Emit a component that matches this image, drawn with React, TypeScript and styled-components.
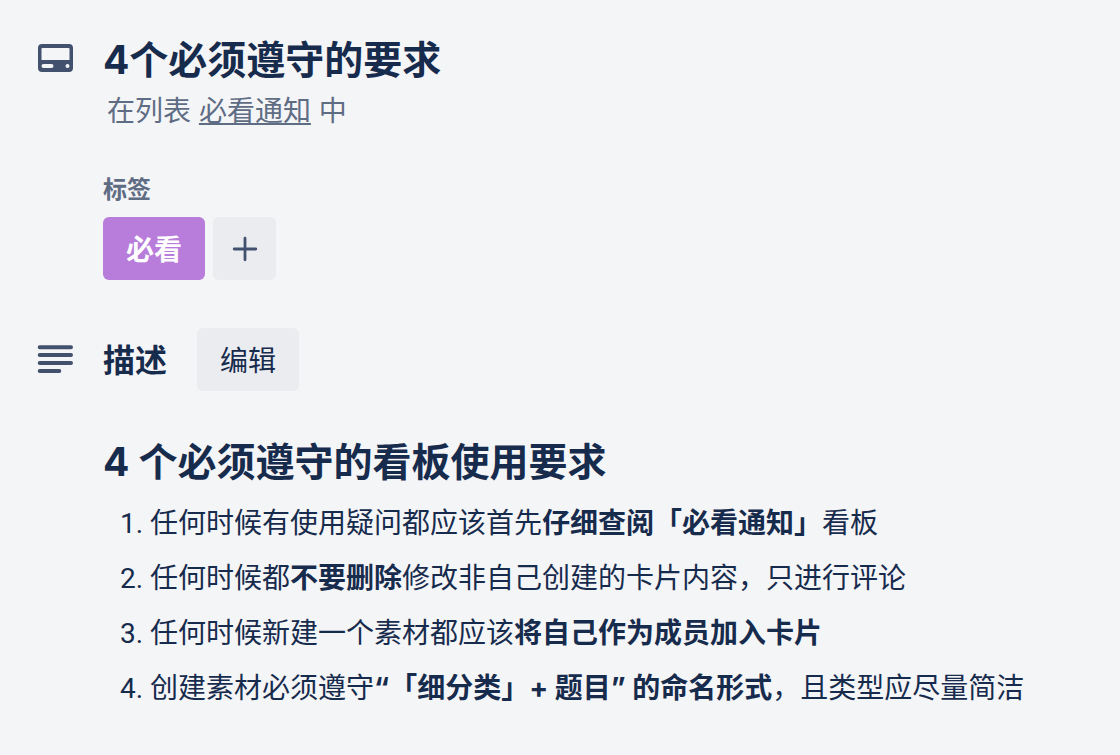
import React from "react";
import styled, { createGlobalStyle } from "styled-components";

const color = {
  page: "#f4f5f7",
  text: "#172b4d",
  subtle: "#5e6c84",
  icon: "#42526e",
  neutral: "#ebecf0",
  purple: "#b87ddb",
};

const GlobalStyle = createGlobalStyle`
  *, *::before, *::after { box-sizing: border-box; }
  body {
    margin: 0;
    background: ${color.page};
    color: ${color.text};
    font-family: Inter, "Noto Sans CJK SC", sans-serif;
    font-size: 28px;
    line-height: 40px;
    text-spacing-trim: space-all;
  }
  h1, h2, h3, p, ol { margin: 0; padding: 0; }
  button { font: inherit; color: inherit; border: 0; cursor: pointer; }
`;

const Card = styled.main`
  display: flex;
  flex-direction: column;
  padding: 32px 36px;
`;

const Section = styled.section<{ $space?: number }>`
  display: grid;
  grid-template-columns: 38px minmax(0, 1fr);
  column-gap: 29px;
  margin-top: ${(p) => p.$space ?? 0}px;
`;

const IconCell = styled.div<{ $height: number }>`
  display: flex;
  align-items: center;
  height: ${(p) => p.$height}px;
  color: ${color.icon};
`;

const Body = styled.div`
  grid-column: 2;
`;

const Title = styled.h1`
  font-size: 39px;
  line-height: 56px;
  font-weight: 700;
`;

const ListName = styled.p`
  padding-left: 4px;
  margin-top: 3px;
  color: ${color.subtle};
`;

const ListLink = styled.a`
  color: inherit;
  text-decoration: underline;
  text-decoration-thickness: 2px;
  text-underline-offset: 2px;
`;

const LabelHeading = styled.h3`
  font-size: 24px;
  line-height: 32px;
  font-weight: 600;
  color: ${color.subtle};
`;

const Row = styled.div<{ $gap: number; $top?: number }>`
  display: flex;
  align-items: center;
  gap: ${(p) => p.$gap}px;
  margin-top: ${(p) => p.$top ?? 0}px;
`;

const Button = styled.button<{ $tone?: "purple" | "neutral"; $square?: boolean }>`
  display: flex;
  align-items: center;
  justify-content: center;
  height: 63px;
  min-width: 63px;
  padding: ${(p) => (p.$square ? "0" : "2px 23px 0")};
  border-radius: 6px;
  background: ${(p) => (p.$tone === "purple" ? color.purple : color.neutral)};
  color: ${(p) => (p.$tone === "purple" ? "#fff" : color.text)};
  font-weight: ${(p) => (p.$tone === "purple" ? 700 : 400)};
`;

const SectionTitle = styled.h2`
  padding-top: 2px;
  font-size: 32px;
  line-height: 40px;
  font-weight: 700;
`;

const DescriptionTitle = styled(Title).attrs({ as: "h2" })`
  margin-top: 43px;
`;

const Rules = styled.ol`
  && {
    padding-left: 47px;
    margin-top: 13px;
  }
  display: flex;
  flex-direction: column;
  gap: 15px;

  li::marker {
    font-family: Roboto, sans-serif;
  }
`;

const Strong = styled.strong`
  font-weight: 700;
`;

const CardIcon = () => (
  <svg width="38" height="32" viewBox="0 0 38 32" aria-hidden="true">
    <path
      fill="currentColor"
      fillRule="evenodd"
      d="M6 2h27a4 4 0 0 1 4 4v20a4 4 0 0 1-4 4H6a4 4 0 0 1-4-4V6a4 4 0 0 1 4-4Zm.5 4a1 1 0 0 0-1 1v11h28V7a1 1 0 0 0-1-1ZM7.500 22a2 2 0 0 0 0 4h8a2 2 0 0 0 0-4Zm24 0a2 2 0 1 0 0 4 2 2 0 0 0 0-4Z"
    />
  </svg>
);

const LinesIcon = () => (
  <svg width="38" height="32" viewBox="0 0 38 32" aria-hidden="true">
    <g stroke="currentColor" strokeWidth="4" strokeLinecap="round">
      <path d="M3.700 3.200H35M3.700 11.100H35M3.700 19H35M3.700 26.900H23.300" />
    </g>
  </svg>
);

const PlusIcon = () => (
  <svg width="26" height="26" viewBox="0 0 26 26" aria-hidden="true">
    <path
      d="M13 2.200v21.600M2.200 13h21.600"
      stroke={color.icon}
      strokeWidth="2.800"
      strokeLinecap="round"
    />
  </svg>
);

export default function App() {
  return (
    <>
      <GlobalStyle />
      <Card lang="zh-CN">
        <Section>
          <IconCell $height={52}>
            <CardIcon />
          </IconCell>
          <Body>
            <Title>4个必须遵守的要求</Title>
            <ListName>
              在列表 <ListLink href="#list">必看通知</ListLink> 中
            </ListName>
          </Body>
        </Section>

        <Section $space={43}>
          <Body>
            <LabelHeading>标签</LabelHeading>
            <Row $gap={8} $top={11}>
              <Button type="button" $tone="purple">
                必看
              </Button>
              <Button type="button" $square aria-label="添加标签">
                <PlusIcon />
              </Button>
            </Row>
          </Body>
        </Section>

        <Section $space={48}>
          <IconCell $height={63}>
            <LinesIcon />
          </IconCell>
          <Body>
            <Row $gap={30}>
              <SectionTitle>描述</SectionTitle>
              <Button type="button">编辑</Button>
            </Row>
            <DescriptionTitle>4 个必须遵守的看板使用要求</DescriptionTitle>
            <Rules>
              <li>
                任何时候有使用疑问都应该首先<Strong>仔细查阅「必看通知」</Strong>看板
              </li>
              <li>
                任何时候都<Strong>不要删除</Strong>修改非自己创建的卡片内容，只进行评论
              </li>
              <li>
                任何时候新建一个素材都应该<Strong>将自己作为成员加入卡片</Strong>
              </li>
              <li>
                创建素材必须遵守<Strong>“「细分类」+ 题目” 的命名形式</Strong>，且类型应尽量简洁
              </li>
            </Rules>
          </Body>
        </Section>
      </Card>
    </>
  );
}
